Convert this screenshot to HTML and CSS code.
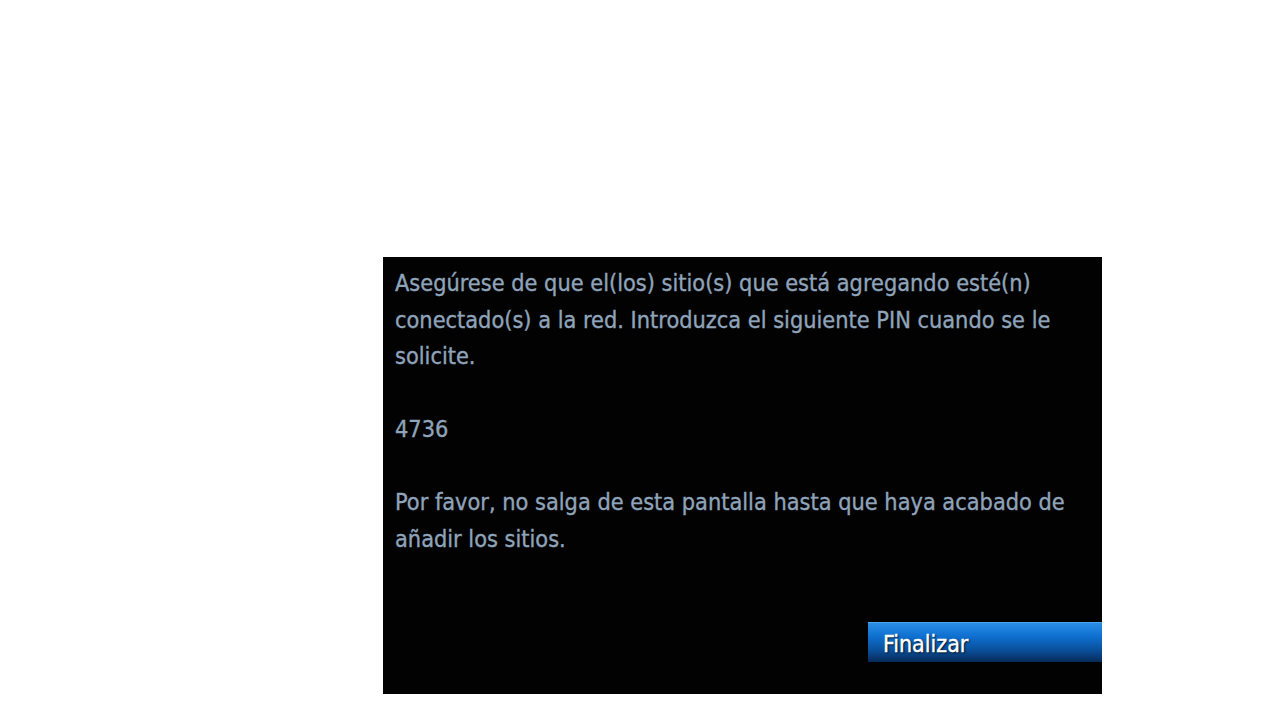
FILE: index.html
```html
<!DOCTYPE html>
<html lang="es">
<head>
<meta charset="utf-8">
<link rel="stylesheet" href="styles.css">
</head>
<body>
<div class="page">
  <div class="dialog">
    <div class="message">
      <p>Asegúrese de que el(los) sitio(s) que está agregando esté(n) conectado(s) a la red. Introduzca el siguiente PIN cuando se le solicite.</p>
      <p>4736</p>
      <p>Por favor, no salga de esta pantalla hasta que haya acabado de añadir los sitios.</p>
    </div>
    <div class="actions">
      <div class="btn">Finalizar</div>
    </div>
  </div>
</div>
</body>
</html>
```
FILE: styles.css
```css
html, body {
  margin: 0;
  padding: 0;
  background: #ffffff;
}
.page {
  width: 1280px;
  height: 720px;
  padding: 257px 0 0 383px;
  box-sizing: border-box;
}
.dialog {
  width: 719px;
  height: 437px;
  background: #020203;
  display: flex;
  flex-direction: column;
  box-sizing: border-box;
  padding-top: 8px;
}
.message {
  padding: 0 20px 0 12px;
  font-family: "DejaVu Sans Condensed", "DejaVu Sans", sans-serif;
  font-size: 23.3px;
  line-height: 36.5px;
  color: #8fa4ba;
  -webkit-text-stroke: 0.35px #8fa4ba;
  flex: 1;
}
.message p {
  margin: 0 0 36.5px 0;
}
.actions {
  display: flex;
  justify-content: flex-end;
  padding-bottom: 32px;
}
.btn {
  width: 234px;
  height: 40px;
  box-sizing: border-box;
  padding: 3px 0 0 15px;
  background: linear-gradient(to bottom, #2a8ee6 0%, #0e6fcf 35%, #0a4f9a 70%, #062a58 100%);
  border-top: 1px solid #4aa6f0;
  color: #ffffff;
  font-family: "DejaVu Sans Condensed", "DejaVu Sans", sans-serif;
  font-size: 23px;
  line-height: 36px;
  -webkit-text-stroke: 0.4px #ffffff;
  text-shadow: 1px 1px 2px #000000;
}
```
